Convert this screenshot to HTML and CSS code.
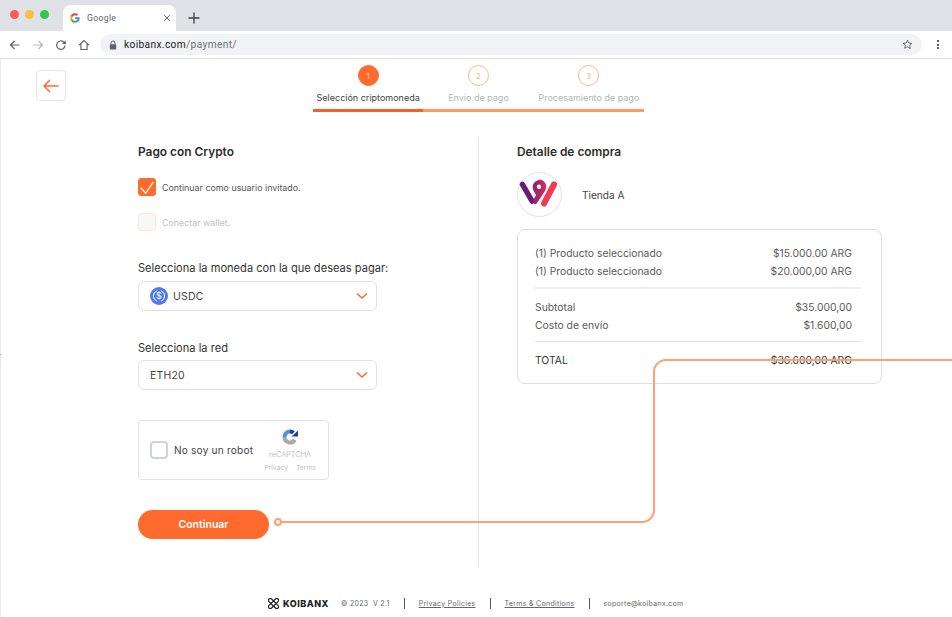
FILE: index.html
```html
<!DOCTYPE html>
<html lang="es">
  <head>
    <meta charset="UTF-8" />
    <meta name="viewport" content="width=device-width, initial-scale=1.0" />
    <title>Koibanx - Pago con Crypto</title>
    <link rel="stylesheet" href="styles.css">
  </head>

  <body>
    <!-- Ventana del navegador -->
    <header class="browser">
      <div class="tabbar">
        <div class="dots">
          <span class="dot dot--red"></span>
          <span class="dot dot--yellow"></span>
          <span class="dot dot--green"></span>
        </div>
        <div class="tab">
          <svg class="tab__icon" viewBox="0 0 24 24" width="10" height="10">
            <path fill="#4285f4" d="M23 12.3c0-.8-.1-1.600-.2-2.300H12v4.400h6.200a5.300 5.300 0 0 1-2.300 3.500v2.900h3.700c2.200-2 3.400-5 3.400-8.500z"/>
            <path fill="#34a853" d="M12 23.500c3.100 0 5.700-1 7.600-2.800l-3.700-2.900c-1 .7-2.300 1.100-3.900 1.100-3 0-5.500-2-6.400-4.700H1.800v3A11.500 11.500 0 0 0 12 23.500z"/>
            <path fill="#fbbc05" d="M5.600 14.200a6.900 6.900 0 0 1 0-4.400v-3H1.800a11.500 11.500 0 0 0 0 10.400z"/>
            <path fill="#ea4335" d="M12 5.100c1.700 0 3.200.6 4.400 1.700l3.300-3.300A11.500 11.500 0 0 0 1.800 6.800l3.800 3c.9-2.700 3.400-4.700 6.400-4.700z"/>
          </svg>
          <span class="tab__title">Google</span>
          <svg class="tab__close" viewBox="0 0 10 10" width="8" height="8">
            <path d="M1.500 1.500l7 7M8.500 1.500l-7 7" stroke="#5f6368" stroke-width="1.200" fill="none"/>
          </svg>
        </div>
        <svg class="tab-new" viewBox="0 0 12 12" width="12" height="12">
          <path d="M6 .5v11M.5 6h11" stroke="#3c4043" stroke-width="1.300" fill="none"/>
        </svg>
      </div>
      <div class="toolbar">
        <svg class="tool" viewBox="0 0 12 12" width="12" height="12">
          <path d="M10.500 6h-9M5.500 2l-4 4 4 4" stroke="#5f6368" stroke-width="1.200" fill="none"/>
        </svg>
        <svg class="tool" viewBox="0 0 12 12" width="12" height="12">
          <path d="M1.500 6h9M6.500 2l4 4-4 4" stroke="#b4b7bb" stroke-width="1.200" fill="none"/>
        </svg>
        <svg class="tool" viewBox="0 0 12 12" width="12" height="12">
          <path d="M10 6.500a4.200 4.200 0 1 1-1.200-3.300L10.300 4.700" stroke="#5f6368" stroke-width="1.200" fill="none"/>
          <path d="M10.800 1.300v3.800H7z" fill="#5f6368"/>
        </svg>
        <svg class="tool" viewBox="0 0 12 12" width="12" height="12">
          <path d="M6 1.500L1.500 5.800h1.400v4.700h6.200V5.800h1.400z" stroke="#5f6368" stroke-width="1.100" fill="none"/>
        </svg>
        <div class="omnibox">
          <svg viewBox="0 0 10 12" width="8" height="10">
            <path d="M2.500 5V3.500a2.500 2.500 0 0 1 5 0V5" stroke="#5f6368" stroke-width="1.200" fill="none"/>
            <rect x="1" y="5" width="8" height="6.500" rx=".8" fill="#5f6368"/>
          </svg>
          <span class="omnibox__url">koibanx.com<span class="omnibox__path">/payment/</span></span>
          <svg class="omnibox__star" viewBox="0 0 12 12" width="11" height="11">
            <path d="M6 1.200l1.450 3.150 3.450.4-2.550 2.350.7 3.400L6 8.400l-3.050 1.700.7-3.400L1.100 4.750l3.450-.4z" stroke="#5f6368" stroke-width="1" fill="none"/>
          </svg>
        </div>
        <div class="kebab"><i></i><i></i><i></i></div>
      </div>
    </header>

    <main class="page">
      <div class="topbar">
        <a class="back" href="#">
          <svg viewBox="0 0 16 14" width="16" height="14">
            <path d="M15.500 7H1M7 1L1 7l6 6" stroke="#ff6b2e" stroke-width="1.500" fill="none"/>
          </svg>
        </a>
        <ol class="steps">
          <li class="step step--active"><span class="step__num">1</span><span class="step__label">Selección criptomoneda</span></li>
          <li class="step"><span class="step__num">2</span><span class="step__label">Envío de pago</span></li>
          <li class="step"><span class="step__num">3</span><span class="step__label">Procesamiento de pago</span></li>
        </ol>
      </div>

      <div class="columns">
        <!-- Formulario -->
        <section class="pay">
          <h2 class="title">Pago con Crypto</h2>
          <div class="check check--on">
            <span class="check__box">
              <svg viewBox="0 0 18 18" width="18" height="18">
                <path d="M2.800 9.700l4.900 5.600L15.300 4" stroke="#fff" stroke-width="1.300" fill="none"/>
              </svg>
            </span>
            Continuar como usuario invitado.
          </div>
          <div class="check check--off">
            <span class="check__box"></span>
            Conectar wallet.
          </div>

          <label class="field-label field-label--coin">Selecciona la moneda con la que deseas pagar:</label>
          <div class="select">
            <svg class="select__coin" viewBox="0 0 18 18" width="18" height="18">
              <circle cx="9" cy="9" r="9" fill="#4f7ce8"/>
              <path d="M6.800 3.900a5.500 5.500 0 0 0 0 10.200M11.200 3.900a5.500 5.500 0 0 1 0 10.200" stroke="#fff" stroke-width="1" fill="none"/>
              <text x="9" y="11.700" class="select__coin-sign">$</text>
            </svg>
            <span>USDC</span>
            <svg class="select__arrow" viewBox="0 0 12 8" width="12" height="8">
              <path d="M1 1.500l5 4.500 5-4.500" stroke="#ff6b2e" stroke-width="1.500" fill="none"/>
            </svg>
          </div>

          <label class="field-label field-label--net">Selecciona la red</label>
          <div class="select">
            <span>ETH20</span>
            <svg class="select__arrow" viewBox="0 0 12 8" width="12" height="8">
              <path d="M1 1.500l5 4.500 5-4.500" stroke="#ff6b2e" stroke-width="1.500" fill="none"/>
            </svg>
          </div>

          <div class="captcha">
            <span class="captcha__box"></span>
            <span class="captcha__text">No soy un robot</span>
            <div class="captcha__brand">
              <svg viewBox="0 0 16 16" width="16" height="16">
                <path d="M2.500 8A5.500 5.500 0 0 0 12.800 10.700" stroke="#a9a9a9" stroke-width="4" fill="none"/>
                <path d="M2.500 8A5.500 5.500 0 0 1 8 2.500" stroke="#4d8ef0" stroke-width="4" fill="none"/>
                <path d="M8 2.500a5.500 5.500 0 0 1 3.500 1.300" stroke="#1f3fa8" stroke-width="4" fill="none"/>
                <path d="M9.500 7.500H16V1.500z" fill="#1f3fa8"/>
              </svg>
              <span class="captcha__name">reCAPTCHA</span>
              <span class="captcha__links"><span>Privacy</span><span>Terms</span></span>
            </div>
          </div>

          <button class="continue" type="button">Continuar</button>
        </section>

        <!-- Detalle -->
        <section class="detail">
          <h2 class="title">Detalle de compra</h2>
          <div class="store">
            <svg class="store__logo" viewBox="0 0 45 45" width="45" height="45">
              <defs>
                <linearGradient id="logoGrad" x1="0" y1="0" x2="1" y2="0">
                  <stop offset="0" stop-color="#8a2270"/>
                  <stop offset="1" stop-color="#d92c5c"/>
                </linearGradient>
              </defs>
              <circle cx="22.500" cy="22.500" r="22" fill="#fff" stroke="#dfe1e8"/>
              <path d="M5.500 12.500L15 29" stroke="#6a1b78" stroke-width="5.500" fill="none" stroke-linecap="round"/>
              <path d="M22 7.500a7.200 7.200 0 0 1 7.200 7.200c0 3-2 5.500-4 8.500l-5.500 8.300c-.8 1.200-2.200 1-3-.2l-1-1.800 3.300-6.500-2.500-4.500a7.200 7.200 0 0 1 5.500-10.500z" fill="url(#logoGrad)"/>
              <circle cx="22" cy="14.700" r="2.200" fill="#fff"/>
              <path d="M37 12.500L27 31.500" stroke="#ef3a52" stroke-width="6" fill="none" stroke-linecap="round"/>
            </svg>
            <span class="store__name">Tienda A</span>
          </div>

          <div class="summary">
            <div class="summary__group">
              <div class="row"><span>(1) Producto seleccionado</span><span>$15.000.00 ARG</span></div>
              <div class="row"><span>(1) Producto seleccionado</span><span>$20.000,00 ARG</span></div>
            </div>
            <div class="summary__group">
              <div class="row"><span>Subtotal</span><span>$35.000,00</span></div>
              <div class="row"><span>Costo de envío</span><span>$1.600,00</span></div>
            </div>
            <div class="row row--total"><span>TOTAL</span><span>$36.600,00 ARG</span></div>
          </div>
        </section>
      </div>

      <footer class="footer">
        <span class="brand">
          <svg viewBox="0 0 12 12" width="11" height="11">
            <rect x="-1" y="4" width="14" height="4" rx="2" transform="rotate(45 6 6)" stroke="#222" stroke-width="1.300" fill="none"/>
            <rect x="-1" y="4" width="14" height="4" rx="2" transform="rotate(-45 6 6)" stroke="#222" stroke-width="1.300" fill="none"/>
          </svg>
          KOIBANX
        </span>
        <span class="footer__version">© 2023&nbsp; V 2.1</span>
        <i class="footer__sep"></i>
        <a href="#">Privacy Policies</a>
        <i class="footer__sep"></i>
        <a href="#">Terms &amp; Conditions</a>
        <i class="footer__sep"></i>
        <span class="footer__mail">soporte@koibanx.com</span>
      </footer>
    </main>

    <!-- Conector que pasa por encima de la pagina -->
    <svg class="connector" viewBox="0 0 952 617" width="952" height="617">
      <path d="M0 354.500h1.500" stroke="#ff9a66" fill="none"/>
      <circle cx="278" cy="522" r="3" fill="#fff" stroke="#ffa071" stroke-width="2"/>
      <path d="M281 522H642a12 12 0 0 0 12-12V372a12 12 0 0 1 12-12H952" stroke="#ffa071" stroke-width="2" fill="none"/>
    </svg>
  </body>
</html>
```

FILE: styles.css
```css
/* base */
* {
  box-sizing: border-box;
}

html,
body {
  margin: 0;
  padding: 0;
  height: 617px;
  overflow: hidden;
  background: #fff;
  font-family: Inter, "Liberation Sans", Arial, sans-serif;
  color: #333;
}

/* navegador */
.browser {
  height: 59px;
  border-bottom: 1px solid #dcdee2;
}

.tabbar {
  height: 31px;
  background: #dee1e6;
  display: flex;
  align-items: flex-end;
}

.dots {
  display: flex;
  gap: 6px;
  align-self: flex-start;
  padding: 10px 0 0 10px;
  width: 63px;
}

.dot {
  width: 9px;
  height: 9px;
  border-radius: 50%;
}

.dot--red { background: #fc5c57; }
.dot--yellow { background: #fdbd41; }
.dot--green { background: #34c84a; }

.tab {
  width: 113px;
  height: 26px;
  background: #fff;
  border-radius: 8px 8px 0 0;
  display: flex;
  align-items: center;
  padding: 0 5px 0 7px;
  font-family: Roboto, Arial, sans-serif;
  font-size: 8.700px;
  letter-spacing: .3px;
  color: #5f6368;
}

.tab__title {
  margin-left: 7px;
  flex: 1;
}

.tab-new {
  margin: 0 0 7px 12px;
}

.toolbar {
  height: 27px;
  display: flex;
  align-items: center;
  padding-left: 9px;
}

.tool {
  margin-right: 11px;
}

.omnibox {
  margin-left: -1px;
  width: 822px;
  height: 21px;
  background: #f1f3f4;
  border-radius: 11px;
  display: flex;
  align-items: center;
  padding: 0 9px;
}

.omnibox__url {
  margin-left: 7px;
  flex: 1;
  font-family: Roboto, Arial, sans-serif;
  font-size: 10.200px;
  letter-spacing: .35px;
  color: #202124;
}

.omnibox__path {
  color: #6e7175;
}

.kebab {
  margin-left: 15px;
  display: flex;
  flex-direction: column;
  gap: 1.500px;
}

.kebab i {
  width: 2px;
  height: 2px;
  background: #5f6368;
}

/* pagina */
.page {
  height: 558px;
  border-left: 1px solid #e6e7ea;
  display: flex;
  flex-direction: column;
}

.topbar {
  display: flex;
  padding: 6px 0 0 35px;
  height: 78px;
}

.back {
  width: 30px;
  height: 31px;
  margin-top: 5px;
  border: 1px solid #e3e5ec;
  border-radius: 4px;
  display: flex;
  align-items: center;
  justify-content: center;
}

.steps {
  list-style: none;
  margin: 0 0 0 247px;
  padding: 0;
  display: flex;
  width: 331px;
  height: 47px;
}

.step {
  flex: 1;
  display: flex;
  flex-direction: column;
  align-items: center;
  border-bottom: 3px solid #ff9a66;
  white-space: nowrap;
  font-size: 9px;
  color: #b5b5b5;
}

.step--active {
  border-bottom-color: #f4622a;
  color: #444;
}

.step__num {
  width: 21px;
  height: 21px;
  border: 1px solid #ffb48e;
  border-radius: 50%;
  display: flex;
  align-items: center;
  justify-content: center;
  font-size: 8px;
  color: #ffb48e;
}

.step--active .step__num {
  background: #ff6b2e;
  border-color: #ff6b2e;
  color: #ffc9ae;
}

.step__label {
  margin-top: 6px;
}

.columns {
  display: flex;
  padding-left: 137px;
  height: 430px;
}

.pay {
  width: 341px;
  border-right: 1px solid #e6e7ea;
  display: flex;
  flex-direction: column;
  align-items: flex-start;
}

.title {
  margin: 7px 0 0;
  font-size: 11.900px;
  line-height: 15px;
  font-weight: 600;
  color: #2d2d2d;
}

.check {
  display: flex;
  align-items: center;
  gap: 6px;
  font-size: 8.900px;
  color: #555;
}

.check--on {
  margin-top: 19px;
}

.check--off {
  margin-top: 17px;
  color: #c0c0c0;
}

.check__box {
  flex: none;
  width: 18px;
  height: 18px;
  border-radius: 3px;
  background: #ff6b2e;
  border: 1px solid #ff6b2e;
  display: flex;
  align-items: center;
  justify-content: center;
}

.check__box svg {
  flex: none;
}

.check--off .check__box {
  background: #f8f8f8;
  border-color: #ffe3d5;
}

.field-label {
  font-size: 11.100px;
  line-height: 14px;
  color: #333;
}

.field-label--coin {
  margin-top: 30px;
}

.field-label--net {
  margin-top: 30px;
}

.select {
  margin-top: 6px;
  width: 239px;
  height: 30px;
  border: 1px solid #dfe1ea;
  border-radius: 6px;
  display: flex;
  align-items: center;
  gap: 5px;
  padding: 0 8px 0 11px;
  font-size: 10.500px;
  color: #444;
  letter-spacing: .2px;
}

.field-label--net + .select {
  margin-top: 5px;
}

.select__coin-sign {
  font-size: 9px;
  fill: #fff;
  text-anchor: middle;
}

.select__arrow {
  margin-left: auto;
}

.captcha {
  margin-top: 30px;
  width: 191px;
  height: 60px;
  border: 1px solid #dfe1ea;
  border-radius: 4px;
  display: flex;
  align-items: center;
  padding-left: 11px;
}

.captcha__box {
  width: 18px;
  height: 18px;
  border: 2px solid #cfd4dc;
  border-radius: 4px;
}

.captcha__text {
  margin-left: 6px;
  font-size: 10.100px;
  letter-spacing: .2px;
  color: #444;
}

.captcha__brand {
  margin-left: 11px;
  display: flex;
  flex-direction: column;
  align-items: center;
  font-size: 7px;
  line-height: 8px;
  color: #c2c2c2;
}

.captcha__name {
  margin-top: 6px;
  font-size: 7.300px;
}

.captcha__links {
  margin-top: 5px;
  font-size: 6.800px;
  display: flex;
  gap: 8px;
}

.continue {
  margin-top: 30px;
  width: 131px;
  height: 29px;
  border: none;
  border-radius: 15px;
  background: #ff6b2e;
  color: #fff;
  font-family: inherit;
  font-size: 10.500px;
  font-weight: 600;
}

.detail {
  margin-left: 38px;
  width: 365px;
}

.store {
  margin-top: 13px;
  display: flex;
  align-items: center;
  gap: 20px;
  font-size: 10.100px;
  color: #444;
}

.summary {
  margin-top: 12px;
  height: 155px;
  border: 1px solid #dcdee2;
  border-radius: 8px;
  padding: 14px 29px 0 17px;
}

.summary__group {
  padding-bottom: 7px;
  margin-bottom: 9px;
  border-bottom: 2px solid #eeeff3;
  margin-right: -9px;
  padding-right: 9px;
}

.summary__group + .summary__group {
  border-bottom-width: 1px;
  border-bottom-color: #e2e3e7;
}

.row {
  display: flex;
  justify-content: space-between;
  height: 18px;
  line-height: 18px;
  font-size: 10.350px;
  color: #5a5a5a;
}

.row--total {
  color: #333;
}

/* pie */
.footer {
  margin-top: 29px;
  padding-left: 267px;
  display: flex;
  align-items: center;
  height: 14px;
  font-size: 7px;
  letter-spacing: .3px;
  color: #666;
}

.footer a {
  color: #666;
}

.brand {
  display: flex;
  align-items: center;
  gap: 4px;
  font-size: 9px;
  font-weight: 800;
  letter-spacing: .5px;
  color: #222;
}

.footer__version {
  margin-left: 12px;
}

.footer__sep {
  width: 1px;
  height: 11px;
  background: #555;
  margin: 0 14px;
}

/* conector */
.connector {
  position: absolute;
  left: 0;
  top: 0;
  pointer-events: none;
}
```
